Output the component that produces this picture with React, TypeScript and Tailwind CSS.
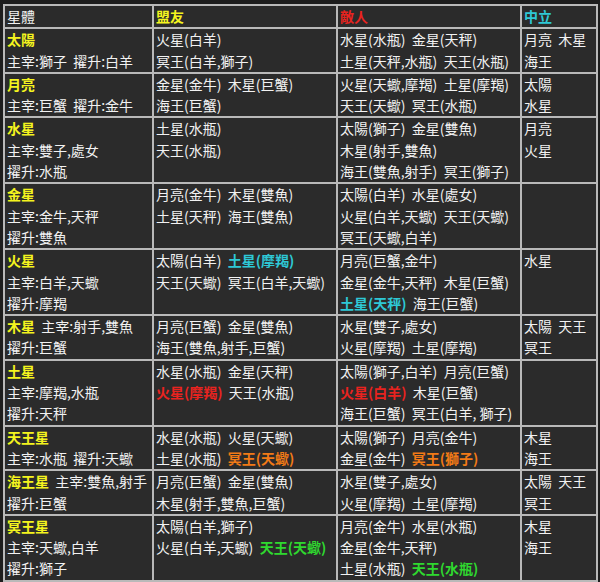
type Seg = { t: string; c?: "y" | "cyan" | "red" | "orange" | "green" };
type Line = Seg[];
type Row = { name: string; body: Line[]; ally: Line[]; enemy: Line[]; neutral: Line[] };

const CLS: Record<string, string> = {
  y: "text-[#f4f41e] font-bold",
  cyan: "text-[#2ec8d6] font-bold",
  red: "text-[#e8231f] font-bold",
  orange: "text-[#f27a16] font-bold",
  green: "text-[#2fd82f] font-bold",
};

const p = (t: string): Line => [{ t }];

const ROWS: Row[] = [
  {
    name: "太陽",
    body: [[{ t: "太陽", c: "y" }], p("主宰:獅子  擢升:白羊")],
    ally: [p("火星(白羊)"), p("冥王(白羊,獅子)")],
    enemy: [p("水星(水瓶)  金星(天秤)"), p("土星(天秤,水瓶)  天王(水瓶)")],
    neutral: [p("月亮  木星"), p("海王")],
  },
  {
    name: "月亮",
    body: [[{ t: "月亮", c: "y" }], p("主宰:巨蟹  擢升:金牛")],
    ally: [p("金星(金牛)  木星(巨蟹)"), p("海王(巨蟹)")],
    enemy: [p("火星(天蠍,摩羯)  土星(摩羯)"), p("天王(天蠍)  冥王(水瓶)")],
    neutral: [p("太陽"), p("水星")],
  },
  {
    name: "水星",
    body: [[{ t: "水星", c: "y" }], p("主宰:雙子,處女"), p("擢升:水瓶")],
    ally: [p("土星(水瓶)"), p("天王(水瓶)")],
    enemy: [p("太陽(獅子)  金星(雙魚)"), p("木星(射手,雙魚)"), p("海王(雙魚,射手)  冥王(獅子)")],
    neutral: [p("月亮"), p("火星")],
  },
  {
    name: "金星",
    body: [[{ t: "金星", c: "y" }], p("主宰:金牛,天秤"), p("擢升:雙魚")],
    ally: [p("月亮(金牛)  木星(雙魚)"), p("土星(天秤)  海王(雙魚)")],
    enemy: [p("太陽(白羊)  水星(處女)"), p("火星(白羊,天蠍)  天王(天蠍)"), p("冥王(天蠍,白羊)")],
    neutral: [],
  },
  {
    name: "火星",
    body: [[{ t: "火星", c: "y" }], p("主宰:白羊,天蠍"), p("擢升:摩羯")],
    ally: [[{ t: "太陽(白羊)  " }, { t: "土星(摩羯)", c: "cyan" }], p("天王(天蠍)  冥王(白羊,天蠍)")],
    enemy: [p("月亮(巨蟹,金牛)"), p("金星(金牛,天秤)  木星(巨蟹)"), [{ t: "土星(天秤)", c: "cyan" }, { t: "  海王(巨蟹)" }]],
    neutral: [p("水星")],
  },
  {
    name: "木星",
    body: [[{ t: "木星", c: "y" }, { t: "  主宰:射手,雙魚" }], p("擢升:巨蟹")],
    ally: [p("月亮(巨蟹)  金星(雙魚)"), p("海王(雙魚,射手,巨蟹)")],
    enemy: [p("水星(雙子,處女)"), p("火星(摩羯)  土星(摩羯)")],
    neutral: [p("太陽  天王"), p("冥王")],
  },
  {
    name: "土星",
    body: [[{ t: "土星", c: "y" }], p("主宰:摩羯,水瓶"), p("擢升:天秤")],
    ally: [p("水星(水瓶)  金星(天秤)"), [{ t: "火星(摩羯)", c: "red" }, { t: "  天王(水瓶)" }]],
    enemy: [
      p("太陽(獅子,白羊)  月亮(巨蟹)"),
      [{ t: "火星(白羊)", c: "red" }, { t: "  木星(巨蟹)" }],
      p("海王(巨蟹)  冥王(白羊, 獅子)"),
    ],
    neutral: [],
  },
  {
    name: "天王星",
    body: [[{ t: "天王星", c: "y" }], p("主宰:水瓶  擢升:天蠍")],
    ally: [p("水星(水瓶)  火星(天蠍)"), [{ t: "土星(水瓶)  " }, { t: "冥王(天蠍)", c: "orange" }]],
    enemy: [p("太陽(獅子)  月亮(金牛)"), [{ t: "金星(金牛)  " }, { t: "冥王(獅子)", c: "orange" }]],
    neutral: [p("木星"), p("海王")],
  },
  {
    name: "海王星",
    body: [[{ t: "海王星", c: "y" }, { t: "  主宰:雙魚,射手" }], p("擢升:巨蟹")],
    ally: [p("月亮(巨蟹)  金星(雙魚)"), p("木星(射手,雙魚,巨蟹)")],
    enemy: [p("水星(雙子,處女)"), p("火星(摩羯)  土星(摩羯)")],
    neutral: [p("太陽  天王"), p("冥王")],
  },
  {
    name: "冥王星",
    body: [[{ t: "冥王星", c: "y" }], p("主宰:天蠍,白羊"), p("擢升:獅子")],
    ally: [p("太陽(白羊,獅子)"), [{ t: "火星(白羊,天蠍)  " }, { t: "天王(天蠍)", c: "green" }]],
    enemy: [p("月亮(金牛)  水星(水瓶)"), p("金星(金牛,天秤)"), [{ t: "土星(水瓶)  " }, { t: "天王(水瓶)", c: "green" }]],
    neutral: [p("木星"), p("海王")],
  },
];

function Cell({ lines }: { lines: Line[] }) {
  return (
    <td className="border-2 border-[#b9b9b9] align-top pl-[2px] pr-0 py-0">
      {lines.map((line, i) => (
        <div key={i} className="whitespace-pre">
          {line.map((s, j) => (
            <span key={j} className={s.c ? CLS[s.c] : undefined}>
              {s.t}
            </span>
          ))}
        </div>
      ))}
    </td>
  );
}

export default function App() {
  return (
    <div
      className="w-[600px] h-[582px] bg-[#1d1d1d] pt-[4px] pl-[3px] text-[14px] leading-[21.3px] text-[#f2f2f2]"
      style={{ fontFamily: '"Noto Sans CJK TC", "Noto Sans CJK SC", sans-serif' }}
    >
      <table className="w-[593px] table-fixed border-collapse bg-[#2b2b2b]">
        <colgroup>
          <col className="w-[149px]" />
          <col className="w-[184px]" />
          <col className="w-[184px]" />
          <col className="w-[76px]" />
        </colgroup>
        <thead>
          <tr>
            <th className="border-2 border-[#b9b9b9] text-left font-normal pl-[2px] py-0">星體</th>
            <th className="border-2 border-[#b9b9b9] text-left font-bold text-[#f4f41e] pl-[2px] py-0">盟友</th>
            <th className="border-2 border-[#b9b9b9] text-left font-bold text-[#e8231f] pl-[2px] py-0">敵人</th>
            <th className="border-2 border-[#b9b9b9] text-left font-bold text-[#2ec8d6] pl-[2px] py-0">中立</th>
          </tr>
        </thead>
        <tbody>
          {ROWS.map((r) => (
            <tr key={r.name}>
              <Cell lines={r.body} />
              <Cell lines={r.ally} />
              <Cell lines={r.enemy} />
              <Cell lines={r.neutral} />
            </tr>
          ))}
        </tbody>
      </table>
    </div>
  );
}
